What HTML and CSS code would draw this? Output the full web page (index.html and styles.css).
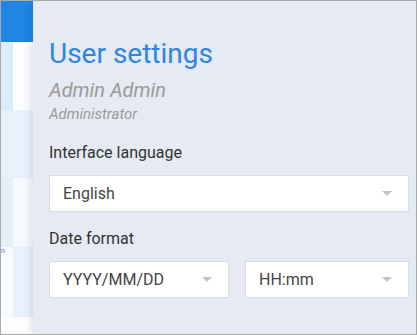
FILE: index.html
```html
<!DOCTYPE html>
<html>
<head>
<meta charset="utf-8">
<link rel="stylesheet" href="styles.css">
</head>
<body>
<div class="frame">
  <div class="sidebar">
    <div class="topbar"></div>
    <div class="cells">
      <div class="c r1a"></div><div class="c r1b"></div>
      <div class="c r2a"></div><div class="c r2b"></div>
      <div class="c r3a"></div><div class="c r3b"></div>
      <div class="c r4a"><span class="frag">n</span></div><div class="c r4b"></div>
      <div class="c r5a"></div><div class="c r5b"></div>
    </div>
  </div>
  <div class="panel">
    <h1 class="title">User settings</h1>
    <div class="name">Admin Admin</div>
    <div class="role">Administrator</div>
    <div class="label lang-label">Interface language</div>
    <div class="select full"><span class="value">English</span><span class="caret"></span></div>
    <div class="label date-label">Date format</div>
    <div class="row">
      <div class="select date"><span class="value">YYYY/MM/DD</span><span class="caret"></span></div>
      <div class="select time"><span class="value">HH:mm</span><span class="caret"></span></div>
    </div>
  </div>
</div>
</body>
</html>
```
FILE: styles.css
```css
* { box-sizing: border-box; }
html, body { margin: 0; padding: 0; }
body { font-family: Roboto, "Noto Sans", sans-serif; background: #fff; }
.frame {
  width: 417px; height: 335px;
  border: 1px solid #a9a9a9;
  display: flex;
  overflow: hidden;
}
.sidebar { width: 32px; flex: none; display: flex; flex-direction: column; }
.topbar { height: 41px; background: #1f84e2; }
.cells {
  flex: 1;
  display: grid;
  grid-template-columns: 12px 20px;
  grid-template-rows: 68px 68px 69px 70px 1fr;
}
.c { position: relative; overflow: hidden; }
.r1a { background: #dcebfa; } .r1b { background: #fcfdff; }
.r2a { background: #e6f0fb; } .r2b { background: #e8f1fb; }
.r3a { background: #e5effb; } .r3b { background: #f6f9fe; }
.r4a { background: #f9fbff; } .r4b { background: #e8f1fb; }
.r5a { background: #fdfeff; } .r5b { background: #fdfeff; }
.frag { position: absolute; left: 0; top: 0; font-size: 7px; line-height: 8px; color: #6a64d8; }
.panel {
  flex: 1;
  background: #e6eaf2;
  box-shadow: -3px 0 7px rgba(40, 60, 90, 0.12);
  padding: 37px 7px 0 16px;
  position: relative;
}
.title {
  margin: 0;
  font-weight: 400;
  font-size: 28px;
  line-height: 32px;
  color: #2f86e1;
}
.name {
  font-style: italic;
  font-size: 20px;
  line-height: 24px;
  color: #9a9a9a;
  margin-top: 8px;
}
.role {
  font-style: italic;
  font-size: 15px;
  line-height: 18px;
  color: #9a9a9a;
  margin-top: 3px;
}
.label {
  font-size: 16px;
  line-height: 20px;
  color: #333;
}
.lang-label { margin-top: 20px; }
.date-label { margin-top: 17px; }
.select {
  height: 37px;
  background: #fff;
  border: 1px solid #d8dee8;
  display: flex;
  align-items: center;
  justify-content: space-between;
  padding: 0 16px 0 13px;
  font-size: 16px;
  color: #444;
}
.full { margin-top: 12px; }
.row { display: flex; gap: 16px; margin-top: 12px; }
.date { width: 180px; }
.time { width: 164px; }
.caret {
  width: 0; height: 0;
  border-left: 5px solid transparent;
  border-right: 5px solid transparent;
  border-top: 5px solid #bcc5d2;
}
```
